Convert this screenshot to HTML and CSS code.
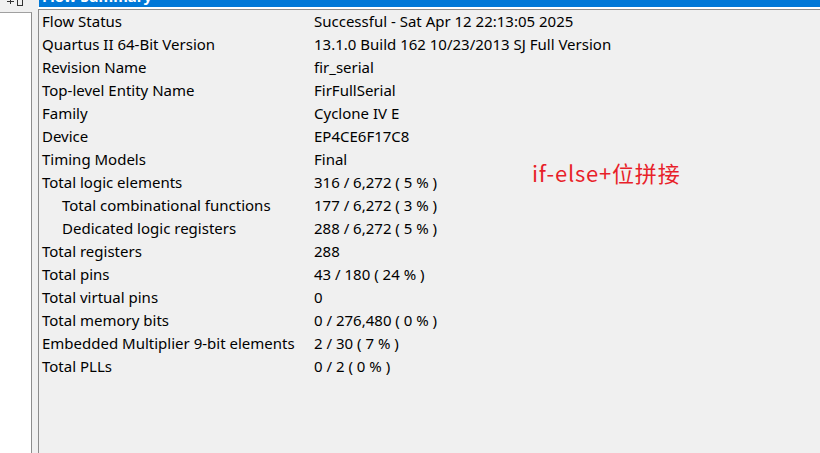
FILE: index.html
```html
<!DOCTYPE html>
<html>
<head>
<meta charset="utf-8">
<link rel="stylesheet" href="styles.css">
</head>
<body>
<div class="app">
  <div class="side">
    <div class="side-top"><span class="plus-v"></span><span class="plus-h"></span><span class="box"></span></div>
    <div class="side-body"></div>
  </div>
  <div class="main">
    <div class="title"><span>Flow Summary</span></div>
    <div class="sep"></div>
    <div class="panel">
      <table class="grid">
        <tr><td>Flow Status</td><td>Successful - Sat Apr 12 22:13:05 2025</td></tr>
        <tr><td>Quartus II 64-Bit Version</td><td>13.1.0 Build 162 10/23/2013 SJ Full Version</td></tr>
        <tr><td>Revision Name</td><td>fir_serial</td></tr>
        <tr><td>Top-level Entity Name</td><td>FirFullSerial</td></tr>
        <tr><td>Family</td><td>Cyclone IV E</td></tr>
        <tr><td>Device</td><td>EP4CE6F17C8</td></tr>
        <tr><td>Timing Models</td><td>Final</td></tr>
        <tr><td>Total logic elements</td><td>316 / 6,272 ( 5 % )</td></tr>
        <tr><td class="ind">Total combinational functions</td><td>177 / 6,272 ( 3 % )</td></tr>
        <tr><td class="ind">Dedicated logic registers</td><td>288 / 6,272 ( 5 % )</td></tr>
        <tr><td>Total registers</td><td>288</td></tr>
        <tr><td>Total pins</td><td>43 / 180 ( 24 % )</td></tr>
        <tr><td>Total virtual pins</td><td>0</td></tr>
        <tr><td>Total memory bits</td><td>0 / 276,480 ( 0 % )</td></tr>
        <tr><td>Embedded Multiplier 9-bit elements</td><td>2 / 30 ( 7 % )</td></tr>
        <tr><td>Total PLLs</td><td>0 / 2 ( 0 % )</td></tr>
      </table>
      <div class="note">if-else+位拼接</div>
    </div>
  </div>
</div>
</body>
</html>
```

FILE: styles.css
```css
html, body {
  margin: 0;
  padding: 0;
  background: #f0f0f0;
  width: 820px;
  height: 453px;
  overflow: hidden;
}
.app {
  display: flex;
  height: 453px;
}
.side {
  width: 32px;
  display: flex;
  flex-direction: column;
}
.side-top {
  height: 12px;
  position: relative;
  overflow: hidden;
}
.plus-v {
  position: absolute;
  left: 10px;
  top: 0;
  width: 1px;
  height: 4px;
  background: #333;
}
.plus-h {
  position: absolute;
  left: 7px;
  top: 1px;
  width: 7px;
  height: 1px;
  background: #333;
}
.box {
  position: absolute;
  left: 17px;
  top: -3px;
  width: 6px;
  height: 9px;
  border: 1px solid #333;
  box-sizing: border-box;
}
.side-body {
  flex: 1;
  background: #fff;
  border-top: 1px solid #a0a0a0;
  border-right: 1px solid #8c8c8c;
}
.main {
  margin-left: 6px;
  flex: 1;
  display: flex;
  flex-direction: column;
}
.title {
  margin-left: 1px;
  height: 7px;
  background: #0078d7;
  overflow: hidden;
  color: #fff;
  font: bold 15px "Noto Sans", sans-serif;
}
.title span {
  display: block;
  margin-top: -14px;
  padding-left: 3px;
  line-height: 20px;
}
.sep {
  height: 2px;
  background: #fff;
}
.panel {
  flex: 1;
  border-top: 1px solid #8c8c8c;
  border-left: 1px solid #8c8c8c;
  position: relative;
  padding: 0 0 0 3px;
}
.grid {
  border-collapse: collapse;
  font: 15px "Noto Sans", sans-serif;
  color: #000;
}
.grid td {
  padding: 0;
  height: 23px;
  line-height: 23px;
  white-space: nowrap;
  vertical-align: middle;
}
.grid td:first-child {
  width: 272px;
  box-sizing: border-box;
}
.grid td.ind {
  padding-left: 20px;
}
.note {
  position: absolute;
  left: 493px;
  top: 146px;
  color: #e81f2a;
  font: 22px "Noto Sans CJK SC", sans-serif;
  letter-spacing: 0.8px;
}
```
